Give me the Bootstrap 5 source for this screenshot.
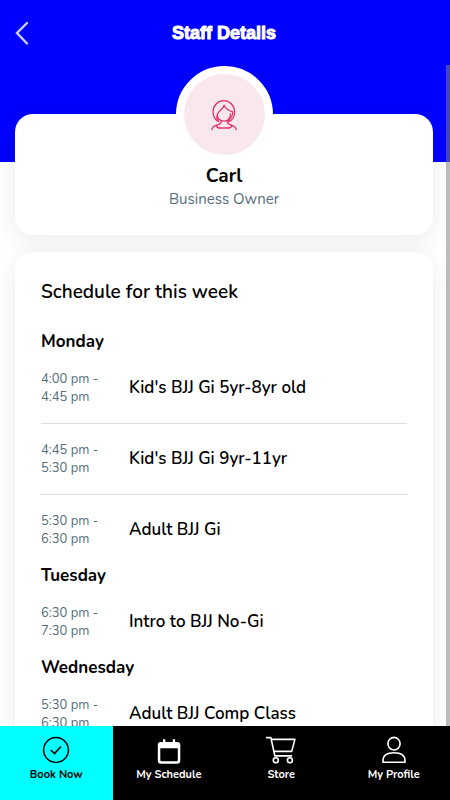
<!DOCTYPE html>
<html lang="en">
<head>
<meta charset="utf-8">
<meta name="viewport" content="width=device-width, initial-scale=1">
<title>Staff Details</title>
<link rel="stylesheet" href="https://cdn.jsdelivr.net/npm/bootstrap@5.3.0/dist/css/bootstrap.min.css">
<style>
body { font-family: Nunito, Lato, sans-serif; color: #000; }
.top-bar { background: #00f; min-height: 65px; padding: 1px 17px 0 15px; display: grid; grid-template-columns: 24px 1fr 24px; }
.top-title { font: 700 18px/24px "Liberation Sans", Arial, sans-serif; color: #fff; -webkit-text-stroke: 1px #fff; }
.back-btn { line-height: 0; }
.scroll-area { min-height: 0; overflow-y: auto; scrollbar-width: none; background: linear-gradient(#00f, #00f) 0 0 / 100% 97px no-repeat #fff; padding: 49px 17px 24px 15px; }
.scroll-area::-webkit-scrollbar { display: none; }
.scroll-thumb { width: 4px; background: rgba(128, 128, 128, .53); }
.panel { background: #fff; border-radius: 18px; box-shadow: 0 6px 24px rgba(40, 40, 90, .09); }
.staff-panel { padding-bottom: 25px; margin-bottom: 17px; }
.avatar { width: 97px; height: 97px; margin-top: -48px; margin-bottom: 1px; border: 8px solid #fff; background: #f9e7ee; color: #e2336b; }
.staff-name { font-size: 19px; line-height: 24px; font-weight: 700; }
.staff-role { font-size: 15px; line-height: 22px; color: #546e7a; }
.week-panel { padding: 27px 26px; }
.week-title { font-size: 19px; line-height: 26px; font-weight: 600; margin-bottom: 26px; }
.day-title { font-size: 17px; line-height: 21px; font-weight: 700; }
.slot { min-height: 71px; }
.slot + .slot { border-top: 1px solid #ddd; }
.slot-time { width: 88px; padding-right: 24px; font-size: 13px; line-height: 18px; color: #546e7a; }
.slot-name { font-size: 17px; line-height: 22px; font-weight: 600; }
.tab-bar { background: #000; height: 74px; }
.tab-item { color: #fff; font-size: 11px; line-height: 16px; font-weight: 700; padding-top: 9px; gap: 2px; }
.tab-item.current { background: #0ff; color: #000; }
</style>
</head>
<body>
<div class="d-flex flex-column vh-100">
  <header class="top-bar align-items-center">
    <button type="button" class="back-btn btn p-0 border-0 text-start" aria-label="Back">
      <svg width="14" height="24" viewBox="0 0 14 24" fill="none" stroke="#ccccff" stroke-width="2.400" stroke-linecap="round"><path d="M12 2 2 12l10 10.500"/></svg>
    </button>
    <h1 class="top-title text-center m-0">Staff Details</h1>
  </header>
  <div class="position-relative d-flex flex-column flex-grow-1 overflow-hidden">
    <main class="scroll-area flex-grow-1">
      <section class="panel staff-panel d-flex flex-column align-items-center">
        <div class="avatar rounded-circle d-flex align-items-center justify-content-center">
          <svg width="28" height="32" viewBox="0 0 28 32" fill="none" stroke="currentColor" stroke-width="1.300" stroke-linecap="round" stroke-linejoin="round" aria-hidden="true">
            <path d="M8.300 22.600C5 20.500 3 16.800 3 12.700a10.800 11 0 0 1 21.600 0c0 4.700-2.300 8.500-6 10"/>
            <path d="M14.200 6.300c-.5 3.800-7 5.500-6.900 10.200 0 3.200 3 5.600 6.600 5.600 4.200 0 6.700-2.900 6.500-7.300"/>
            <path d="M14.200 6.300c1.400 3.700 4.100 5.400 8.600 6.500-.4 3.900-1.600 6.900-4.400 8.800M7.300 16.500c-.8 1.200-.3 3.500 1 5.300"/>
            <path d="M11.200 22c.1 2.500-1.500 3.400-4.100 4.100-3.500.8-5 1.800-5.100 4.500M17.100 22c0 2.500 1.600 3.400 4.100 4.100 3.300.8 4.700 1.800 4.900 4.500"/>
            <path d="M6.500 26.400c.2 2 1.100 2.600 2.900 2.600h9.300c1.900 0 2.700-.6 3-2.600"/>
          </svg>
        </div>
        <h2 class="staff-name m-0">Carl</h2>
        <p class="staff-role m-0">Business Owner</p>
      </section>
      <section class="panel week-panel">
        <h2 class="week-title">Schedule for this week</h2>
        <h3 class="day-title m-0">Monday</h3>
        <div class="slot d-flex align-items-center"><div class="slot-time flex-shrink-0">4:00 pm - 4:45 pm</div><div class="slot-name">Kid's BJJ Gi 5yr-8yr old</div></div>
        <div class="slot d-flex align-items-center"><div class="slot-time flex-shrink-0">4:45 pm - 5:30 pm</div><div class="slot-name">Kid's BJJ Gi 9yr-11yr</div></div>
        <div class="slot d-flex align-items-center"><div class="slot-time flex-shrink-0">5:30 pm - 6:30 pm</div><div class="slot-name">Adult BJJ Gi</div></div>
        <h3 class="day-title m-0">Tuesday</h3>
        <div class="slot d-flex align-items-center"><div class="slot-time flex-shrink-0">6:30 pm - 7:30 pm</div><div class="slot-name">Intro to BJJ No-Gi</div></div>
        <h3 class="day-title m-0">Wednesday</h3>
        <div class="slot d-flex align-items-center"><div class="slot-time flex-shrink-0">5:30 pm - 6:30 pm</div><div class="slot-name">Adult BJJ Comp Class</div></div>
      </section>
    </main>
    <div class="scroll-thumb position-absolute top-0 end-0 h-100" aria-hidden="true"></div>
  </div>
  <nav class="tab-bar d-flex flex-shrink-0" aria-label="Main">
    <a href="#book" class="tab-item current col-3 d-flex flex-column align-items-center text-decoration-none" aria-current="page">
      <svg width="30" height="30" viewBox="0 0 30 30" fill="none" stroke="currentColor" stroke-width="1.500" aria-hidden="true"><circle cx="15" cy="15" r="12.400"/><path d="m9.800 15 3.700 3.500 6.500-7" stroke-width="1.600"/></svg>
      <span>Book Now</span>
    </a>
    <a href="#schedule" class="tab-item col-3 d-flex flex-column align-items-center text-decoration-none">
      <svg width="30" height="30" viewBox="0 0 30 30" aria-hidden="true"><path fill="currentColor" fill-rule="evenodd" d="M9 4.300h2.300V7h7.500V4.300h2.300V7h2.200a3 3 0 0 1 3 3v15.800a3 3 0 0 1-3 3H6.800a3 3 0 0 1-3-3V10a3 3 0 0 1 3-3H9zM6.300 13.200v11.600c0 1 .5 1.500 1.500 1.500h14.500c1 0 1.500-.5 1.500-1.500V13.200z"/></svg>
      <span>My Schedule</span>
    </a>
    <a href="#store" class="tab-item col-3 d-flex flex-column align-items-center text-decoration-none">
      <svg width="30" height="30" viewBox="0 0 30 30" fill="none" stroke="currentColor" stroke-width="1.600" stroke-linejoin="round" aria-hidden="true"><path d="M0 2.600h4.900l3.900 18.300h17.300M5.200 4.400h23.700l-3.200 12H8"/><circle cx="9.800" cy="25.200" r="2.500"/><circle cx="23.900" cy="25.200" r="2.500"/></svg>
      <span>Store</span>
    </a>
    <a href="#profile" class="tab-item col-3 d-flex flex-column align-items-center text-decoration-none">
      <svg width="30" height="30" viewBox="0 0 30 30" fill="none" stroke="currentColor" stroke-width="1.600" stroke-linejoin="round" aria-hidden="true"><ellipse cx="15" cy="8.700" rx="6.100" ry="6.300"/><path d="M4 27.300v-1.500c0-5 4.100-8 11-8s11 3 11 8v1.500z"/></svg>
      <span>My Profile</span>
    </a>
  </nav>
</div>
<script src="https://cdn.jsdelivr.net/npm/bootstrap@5.3.0/dist/js/bootstrap.bundle.min.js"></script>
</body>
</html>
